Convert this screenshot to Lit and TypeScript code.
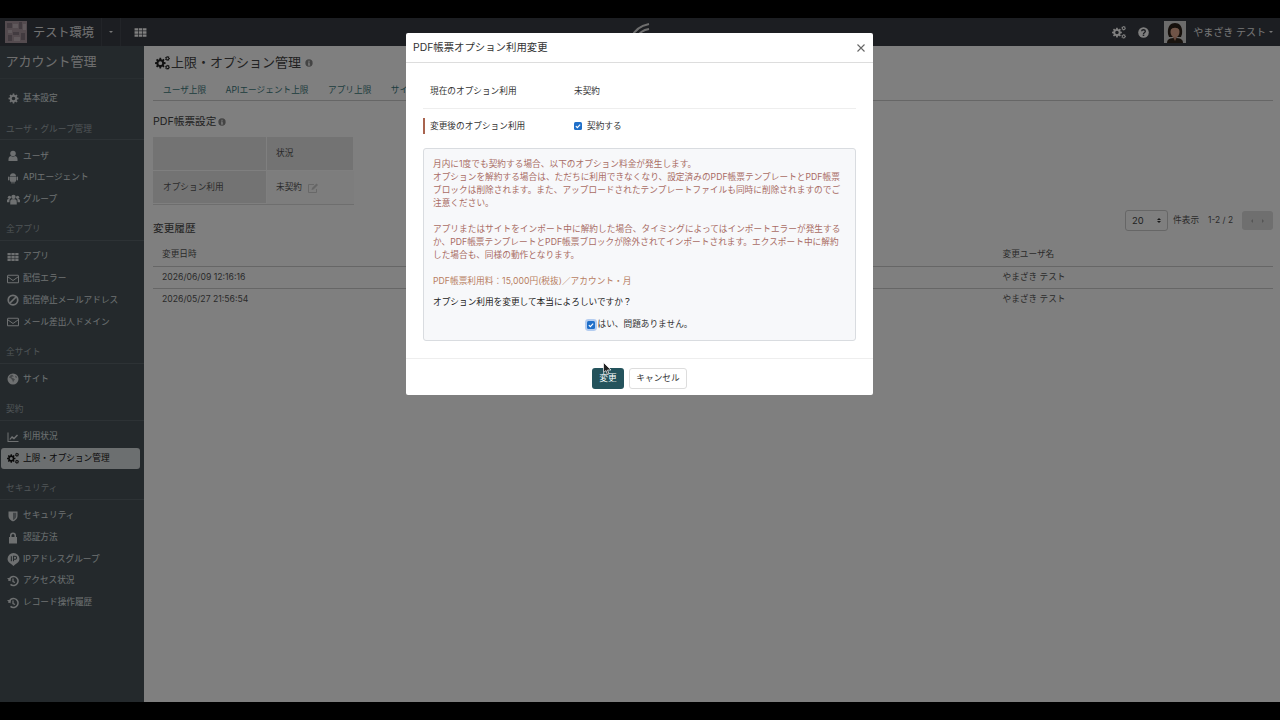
import { LitElement, html, css, svg } from "lit";
import { customElement } from "lit/decorators.js";

const gearD = (cx: number, cy: number, R: number, teeth: number) => {
  const r = R * 0.74;
  const hole = R * 0.36;
  let d = "";
  const step = (Math.PI * 2) / teeth;
  for (let i = 0; i < teeth; i++) {
    const a = i * step;
    const pts: [number, number][] = [
      [r, a - step * 0.34],
      [R, a - step * 0.19],
      [R, a + step * 0.19],
      [r, a + step * 0.34],
    ];
    for (const [rad, ang] of pts) {
      d += `${d ? "L" : "M"}${(cx + rad * Math.cos(ang)).toFixed(2)} ${(cy + rad * Math.sin(ang)).toFixed(2)}`;
    }
  }
  d += `Z M${cx + hole} ${cy}A${hole} ${hole} 0 1 0 ${cx - hole} ${cy}A${hole} ${hole} 0 1 0 ${cx + hole} ${cy}Z`;
  return d;
};
const gear = (cx: number, cy: number, R: number, teeth = 8) =>
  svg`<path fill-rule="evenodd" d=${gearD(cx, cy, R, teeth)}/>`;

const paths: Record<string, unknown> = {
  cog: gear(12, 12, 11),
  cogs: svg`${gear(8.5, 13, 8.5)}${gear(20, 5.5, 4, 7)}${gear(20, 19.5, 4, 7)}`,
  user: svg`<circle cx="12" cy="7" r="5.5"/><path d="M3 22v-4c0-4 3-6 5-6 1 1 2.500 1.600 4 1.600s3-.6 4-1.600c2 0 5 2 5 6v4z"/>`,
  android: svg`<path d="M6 9h12v9a1.500 1.500 0 0 1-1.500 1.500H15V23h-2v-3.500h-2V23H9v-3.500H7.500A1.500 1.500 0 0 1 6 18zM6 8c0-3 2.500-5.500 6-5.500S18 5 18 8z"/><rect x="2" y="9" width="3" height="8" rx="1.500"/><rect x="19" y="9" width="3" height="8" rx="1.500"/>`,
  users: svg`<circle cx="12" cy="7" r="4"/><circle cx="4.500" cy="8" r="3"/><circle cx="19.500" cy="8" r="3"/><path d="M6 21v-5c0-3 2-4.500 3.500-4.500h5c1.500 0 3.500 1.500 3.500 4.500v5z"/><path d="M0 17v-3c0-1.500 1-3 2.500-3h3C4.500 12 4.500 14 4.500 17zM24 17v-3c0-1.500-1-3-2.500-3h-3c1 1 1 3 1 6z"/>`,
  th: svg`<path d="M1 4h6.500v4.500H1zM8.800 4h6.500v4.500H8.800zM16.500 4H23v4.500h-6.500zM1 9.800h6.500v4.500H1zM8.800 9.800h6.500v4.500H8.800zM16.500 9.800H23v4.500h-6.500zM1 15.500h6.500V20H1zM8.800 15.500h6.500V20H8.800zM16.500 15.500H23V20h-6.500z"/>`,
  mail: svg`<path fill="none" stroke="currentColor" stroke-width="2" d="M2 4.500h20a1 1 0 0 1 1 1v14H1v-14a1 1 0 0 1 1-1zM1.500 7.500 12 15l10.500-7.500"/>`,
  ban: svg`<circle cx="12" cy="12" r="9.500" fill="none" stroke="currentColor" stroke-width="3.500"/><path d="M6 18 18 6" stroke="currentColor" stroke-width="3.500"/>`,
  globe: svg`<circle cx="12" cy="12" r="11"/><path fill="#485258" d="M10 3c-3 1-5 3-6 6l4 2 3 4 1 4 2-4 2-2-4-3-3-1 2-2 3 0zM18 5l2 4-2 1-2-3z" opacity=".55"/>`,
  chart: svg`<path d="M1 3h2v17h20v2H1z"/><path d="m5 16 5-6 4 3 6-6 2 2-8 8-4-3-4 4z"/>`,
  shield: svg`<path d="M3 3h18v9c0 6-5 9-9 11-4-2-9-5-9-11z"/><path fill="#485258" opacity=".6" d="M12 5.500h6.500V12c0 4.500-3.500 6.500-6.500 8z"/>`,
  lock: svg`<path d="M4 10h16v13H4z"/><path fill="none" stroke="currentColor" stroke-width="3" d="M7.500 10V7a4.500 4.500 0 0 1 9 0v3"/>`,
  pin: svg`<path d="M12 24c-2-3-11-6-11-13a11 11 0 0 1 22 0c0 7-9 10-11 13z"/><path fill="none" stroke="#485258" stroke-width="2" d="M8 6v9M12 15V6h3a2.500 2.500 0 0 1 0 5.500h-3"/>`,
  history: svg`<path fill="none" stroke="currentColor" stroke-width="3" d="M4 12a9 9 0 1 1 3 6.700"/><path d="M0 5l8 0-1 7z" transform="translate(0 1)"/><path fill="none" stroke="currentColor" stroke-width="2.500" d="M12 7v6l4 2"/>`,
  info: svg`<circle cx="12" cy="12" r="11"/><path fill="#fff" d="M10 5h4v3.500h-4zM9 10.500h5V17h1.500v2.500h-6.500V17H10v-4H9z"/>`,
  help: svg`<circle cx="12" cy="12" r="11.500"/><path fill="none" stroke="#383c44" stroke-width="3" d="M8 9.500C8 7 10 6 12 6s4 1.200 4 3.500c0 3-4 3-4 5.500"/><rect x="10.300" y="16.500" width="3.400" height="3" fill="#383c44"/>`,
  edit: svg`<path fill="none" stroke="currentColor" stroke-width="1.800" d="M19 14v7H3V5h11"/><path d="m10 12 9-9 3 3-9 9-4 1z"/>`,
  check: svg`<path fill="none" stroke="#fff" stroke-width="3.500" d="m5.500 12.500 4.500 4.500 8.500-9"/>`,
};

const icon = (name: string, cls = "") =>
  html`<svg class="ic ic-${name} ${cls}" viewBox="0 0 24 24" fill="currentColor" aria-hidden="true">${paths[name]}</svg>`;

type Group = { head?: string; items: [string, string, boolean?][] };
const NAV: Group[] = [
  { items: [["cog", "基本設定"]] },
  { head: "ユーザ・グループ管理", items: [["user", "ユーザ"], ["android", "APIエージェント"], ["users", "グループ"]] },
  { head: "全アプリ", items: [["th", "アプリ"], ["mail", "配信エラー"], ["ban", "配信停止メールアドレス"], ["mail", "メール差出人ドメイン"]] },
  { head: "全サイト", items: [["globe", "サイト"]] },
  { head: "契約", items: [["chart", "利用状況"], ["cogs", "上限・オプション管理", true]] },
  { head: "セキュリティ", items: [["shield", "セキュリティ"], ["lock", "認証方法"], ["pin", "IPアドレスグループ"], ["history", "アクセス状況"], ["history", "レコード操作履歴"]] },
];

@customElement("app-root")
export class AppRoot extends LitElement {
  static styles = css`
    :host { display: block; width: 1280px; height: 720px; background: #000; overflow: hidden;
      font-family: Inter, "Noto Sans CJK JP", sans-serif; font-size: 8.67px; line-height: 13px; color: #555; }
    * { box-sizing: border-box; }
    .frame { height: 720px; padding: 18px 0; }
    .stage { position: relative; height: 684px; display: flex; flex-direction: column; overflow: hidden; }
    .ic { width: 12px; height: 12px; flex: none; display: block; }

    .top { height: 28px; flex: none; background: #383c44; color: #fff; display: flex; align-items: center; }
    .brandimg { width: 22px; height: 22px; margin-left: 5px; flex: none; display: block; }
    .brand { font-size: 12.2px; margin-left: 6px; width: 68px; color: #e4e4e4; }
    .dd { width: 20px; height: 28px; display: flex; align-items: center; justify-content: center;
      border-left: 1px solid #454950; border-right: 1px solid #454950; }
    .caret { width: 0; height: 0; border: 2px solid transparent; border-top-color: #eee; border-bottom: 0; }
    .top .th { width: 13px; height: 13px; margin-left: 13px; }
    .logo { width: 22px; height: 14px; margin-left: 482px; margin-top: -4px; color: #ddd; }
    .right { margin-left: auto; display: flex; align-items: center; padding-right: 7px; }
    .right .a { width: 14px; height: 14px; }
    .right .b { width: 11px; height: 11px; margin-left: 12px; }
    .avatar { width: 22px; height: 22px; margin-left: 15px; display: block; }
    .uname { margin-left: 7px; margin-right: 3px; font-size: 10px; color: #eee; }

    .body { flex: 1; display: flex; min-height: 0; }
    .side { width: 144px; flex: none; background: #485258; color: #fff; }
    .sidetitle { height: 33px; padding: 7px 5.500px 0; font-size: 13px; line-height: 17px; color: #ddd; border-bottom: 1px solid #525d63; margin-bottom: 9px; }
    .grouphead { height: 30.7px; padding: 13px 6px 0; margin: 0 0 5px; font-size: 8.67px; line-height: 12px; color: #a0aaaf; font-weight: 400; border-bottom: 1px solid #5a656b; }
    .item { height: 21.7px; display: flex; align-items: center; gap: 4px; padding: 0 4px 0 7px; color: #dde1e3; white-space: nowrap; }
    .item.on { background: #d9dee0; color: #111; border-radius: 3px; margin: 0 4px 0 1px; padding: 0 3px 0 6px; }
    .ic-pin { width: 13px; height: 13px; margin: 0 -0.500px; }
    .ic-users { width: 13px; height: 13px; margin: 0 -0.500px; }
    .ic-cog { width: 11px; height: 11px; margin: 0 0.500px; }

    .main { flex: 1; min-width: 0; background: #fff; padding: 0 7px 0 9px; }
    .h1 { height: 33px; display: flex; align-items: center; font-size: 13px; color: #444; }
    .h1 .g { width: 15px; height: 15px; margin: 0 1px 0 2px; color: #222; }
    .h1 .i { width: 8px; height: 8px; margin-left: 4px; color: #888; }
    .tabs { height: 22px; display: flex; border-bottom: 1px solid #ccc; padding-left: 10px; gap: 19.500px; color: #3d7a80; }
    .tabs span { padding-top: 5px; }
    .h2 { font-size: 10.67px; line-height: 14px; color: #444; font-weight: 400; margin: 0; display: flex; align-items: center; }
    .h2 .i { width: 8px; height: 8px; margin-left: 2px; color: #888; }
    .sec1 { margin-top: 14px; }
    .mini { margin-top: 8px; width: 201px; display: grid; grid-template-columns: 114px 87px; grid-template-rows: 34px 33px; border-bottom: 1px solid #ddd; }
    .mini div { display: flex; align-items: center; padding-left: 9px; gap: 5px; }
    .mini div:first-child, .mini div:nth-child(3) { padding-left: 10px; }
    .hd { background: #e6e6e6; border-right: 1px solid #fff; border-bottom: 1px solid #fff; }
    .mini .last { background: #fbfbfb; }
    .edit { width: 12px; height: 12px; color: #ccc; }
    .histhead { display: flex; align-items: center; margin-top: 5px; height: 21px; }
    .histhead .h2 { margin-right: auto; margin-top: 16px; }
    .select { width: 43px; height: 21px; border: 1px solid #ccc; border-radius: 3px; display: flex; align-items: center; justify-content: space-between; padding: 0 6px; font-size: 9.4px; color: #444; }
    .arrows { display: grid; gap: 1px; }
    .arrows i { display: block; width: 0; height: 0; border: 2px solid transparent; border-bottom: 2.500px solid #333; border-top: 0; }
    .arrows i + i { border-bottom: 0; border-top: 2.500px solid #333; }
    .count { margin-left: 5px; }
    .range { margin-left: 9px; margin-right: 9px; font-size: 8.4px; }
    .pager { width: 31px; height: 19px; background: #dedede; border-radius: 3px; display: flex; align-items: center; justify-content: space-around; padding: 0 4px; }
    .pager i { width: 0; height: 0; border: 2px solid transparent; border-left: 0; border-right: 2.500px solid #aaa; }
    .pager i + i { border-right: 0; border-left: 2.500px solid #aaa; }
    .table { margin-top: 12px; }
    .tr { height: 21.7px; display: grid; grid-template-columns: 840.5px 1fr; align-items: center; border-bottom: 1px solid #ccc; padding-left: 9px; }
    .tr:last-child { border-bottom: 0; }
    .tr.first { height: 24px; }

    .backdrop { position: absolute; inset: 0; background: rgba(0,0,0,.5); display: flex; justify-content: center; align-items: flex-start; padding-top: 15px; }
    .modal { width: 467px; height: 362px; margin-left: -1px; background: #fff; color: #333; display: flex; flex-direction: column; border-radius: 2px; }
    .mhead { height: 30px; flex: none; display: flex; align-items: center; justify-content: space-between; padding: 0 7px; border-bottom: 1px solid #ddd; font-size: 10.4px; }
    .x { width: 10px; height: 10px; color: #666; }
    .mbody { flex: 1; padding: 10px 17px 0; }
    .row { display: grid; grid-template-columns: 144px 1fr; padding-left: 7px; align-items: center; }
    .row.r1 { height: 36px; padding-top: 2px; border-bottom: 1px solid #eee; }
    .row.r2 { height: 16px; margin: 9px 0 14px; position: relative; }
    .row.r2::before { content: ""; position: absolute; left: 0; top: 0; bottom: 0; width: 2px; background: #a9644f; }
    .cb { width: 8px; height: 8px; border-radius: 1.500px; background: #1f6fc9; display: block; flex: none; }
    .cbwrap { display: flex; align-items: center; gap: 5px; }
    .box { height: 193px; background: #f7f8fa; border: 1px solid #d9dce0; border-radius: 3px; padding: 9px 9px 8px; }
    .warn { color: #a96c64; margin: 0; white-space: pre-line; letter-spacing: 0.03px; }
    .warn.fee { color: #b87e62; }
    .gap { margin-top: 13px; }
    .q { margin: 8px 0 0; color: #222; }
    .agree { display: flex; justify-content: center; align-items: center; margin-top: 9px; gap: 3px; color: #333; }
    .agree .cb { box-shadow: 0 0 0 2px #b4cdf0; }
    .mfoot { height: 37px; flex: none; border-top: 1px solid #eee; display: flex; justify-content: center; gap: 5px; padding-top: 9px; }
    .btn { height: 21px; border-radius: 3px; display: flex; align-items: center; justify-content: center; font-size: 8.67px; }
    .btn.p { width: 32px; background: #24535c; color: #fff; }
    .btn.s { width: 58px; background: #fff; border: 1px solid #ddd; color: #333; }
    .cursor { position: absolute; left: 603px; top: 344px; width: 9px; height: 13px; }
  `;

  render() {
    return html`<div class="frame"><div class="stage">
      <header class="top">
        <svg class="brandimg" viewBox="0 0 22 22"><rect width="22" height="22" fill="#a8969f"/><path fill="#857680" d="M2 2h5v5H2zM14 1h3v7h-3zM8 11h6v3H8zM3 14h4v6H3zM16 12h4v7h-4z"/><path fill="#c0b2b9" d="M8 3h5v4H8zM3 9h4v3H3zM9 16h6v4H9zM18 3h3v6h-3z"/></svg>
        <span class="brand">テスト環境</span>
        <span class="dd"><i class="caret"></i></span>
        ${icon("th", "th")}
        <svg class="logo" viewBox="0 0 22 14" fill="none" stroke="currentColor" stroke-width="2"><path d="M3 14C5 8 11 3 20 1M8 14c2-4 6-7 12-8"/></svg>
        <div class="right">
          ${icon("cogs", "a")}
          ${icon("help", "b")}
          <svg class="avatar" viewBox="0 0 22 22"><rect width="22" height="22" fill="#d8d8d8"/><path fill="#2c2118" d="M4 13C3 5 7 2 11 2s8 3 7 11l-1 3H5z"/><ellipse cx="11" cy="11" rx="4.500" ry="5.500" fill="#e0a98f"/><path fill="#2c2118" d="M6.500 9C8 6 14 6 15.500 9L15 5H7z"/><path fill="#33281f" d="M3 22c0-4 3-5 8-5s8 1 8 5z"/><path fill="#c98f78" d="M9 16h4l-2 4z"/></svg>
          <span class="uname">やまざき テスト</span>
          <i class="caret"></i>
        </div>
      </header>
      <div class="body">
        <nav class="side">
          <div class="sidetitle">アカウント管理</div>
          ${NAV.map((g) => html`
            ${g.head ? html`<h3 class="grouphead">${g.head}</h3>` : ""}
            ${g.items.map(([ic, label, on]) => html`<div class="item ${on ? "on" : ""}">${icon(ic)}<span>${label}</span></div>`)}
          `)}
        </nav>
        <main class="main">
          <div class="h1">${icon("cogs", "g")}<span>上限・オプション管理</span>${icon("info", "i")}</div>
          <div class="tabs"><span>ユーザ上限</span><span>APIエージェント上限</span><span>アプリ上限</span><span>サイト上限</span></div>
          <h2 class="h2 sec1">PDF帳票設定${icon("info", "i")}</h2>
          <div class="mini">
            <div class="hd"></div><div class="hd">状況</div>
            <div class="hd">オプション利用</div><div class="last">未契約 ${icon("edit", "edit")}</div>
          </div>
          <div class="histhead">
            <h2 class="h2">変更履歴</h2>
            <div class="select"><span>20</span><span class="arrows"><i></i><i></i></span></div>
            <span class="count">件表示</span><span class="range">1-2 / 2</span>
            <div class="pager"><i></i><i></i></div>
          </div>
          <div class="table">
            <div class="tr first"><span>変更日時</span><span>変更ユーザ名</span></div>
            <div class="tr"><span>2026/06/09 12:16:16</span><span>やまざき テスト</span></div>
            <div class="tr"><span>2026/05/27 21:56:54</span><span>やまざき テスト</span></div>
          </div>
        </main>
      </div>
      <div class="backdrop">
        <section class="modal">
          <div class="mhead"><span>PDF帳票オプション利用変更</span>
            <svg class="x" viewBox="0 0 10 10" fill="none" stroke="currentColor" stroke-width="1.100"><path d="m1.500 1.500 7 7M8.500 1.500l-7 7"/></svg></div>
          <div class="mbody">
            <div class="row r1"><span>現在のオプション利用</span><span>未契約</span></div>
            <div class="row r2"><span>変更後のオプション利用</span>
              <span class="cbwrap"><svg class="cb" viewBox="0 0 24 24">${paths.check}</svg>契約する</span></div>
            <div class="box">
              <p class="warn">月内に1度でも契約する場合、以下のオプション料金が発生します。
オプションを解約する場合は、ただちに利用できなくなり、設定済みのPDF帳票テンプレートとPDF帳票
ブロックは削除されます。また、アップロードされたテンプレートファイルも同時に削除されますのでご
注意ください。</p>
              <p class="warn gap">アプリまたはサイトをインポート中に解約した場合、タイミングによってはインポートエラーが発生する
か、PDF帳票テンプレートとPDF帳票ブロックが除外されてインポートされます。エクスポート中に解約
した場合も、同様の動作となります。</p>
              <p class="warn fee gap">PDF帳票利用料：15,000円(税抜)／アカウント・月</p>
              <p class="q">オプション利用を変更して本当によろしいですか？</p>
              <div class="agree"><svg class="cb" viewBox="0 0 24 24">${paths.check}</svg>はい、問題ありません。</div>
            </div>
          </div>
          <div class="mfoot"><span class="btn p">変更</span><span class="btn s">キャンセル</span></div>
        </section>
      </div>
      <svg class="cursor" viewBox="0 0 9 13"><path d="M.5.5v10l2.500-2 1.500 4 1.500-.6-1.500-3.900H8z" fill="#222" stroke="#fff" stroke-width=".7"/></svg>
    </div></div>`;
  }
}
